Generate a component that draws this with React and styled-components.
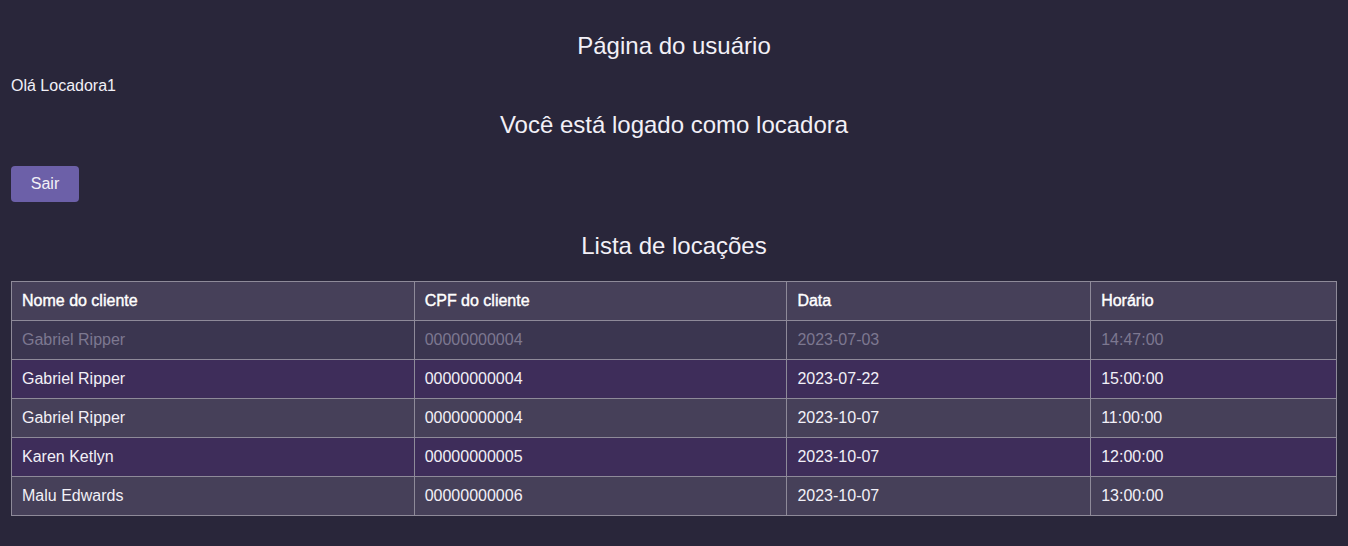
import React from 'react'
import styled, { createGlobalStyle } from 'styled-components'

const GlobalStyle = createGlobalStyle`
  html, body {
    margin: 0;
    padding: 0;
    background: #29263a;
  }
  body {
    font-family: "Liberation Sans", Arial, sans-serif;
    color: #f2f0f7;
  }
`

const Page = styled.div`
  display: flex;
  flex-direction: column;
  padding: 32px 11px 30px;
  min-height: 546px;
  box-sizing: border-box;
`

const Title = styled.h1`
  margin: 0;
  font-size: 24px;
  font-weight: 400;
  line-height: 28px;
  text-align: center;
`

const Greeting = styled.p`
  margin: 17px 0 0;
  font-size: 16px;
  line-height: 18px;
`

const Subtitle = styled(Title)`
  margin-top: 16px;
`

const ExitButton = styled.button`
  align-self: flex-start;
  margin-top: 27px;
  width: 68px;
  height: 36px;
  border: none;
  border-radius: 4px;
  background: #6c60a8;
  color: #f2f0f7;
  font-family: inherit;
  font-size: 16px;
  cursor: pointer;
`

const ListTitle = styled(Title)`
  margin-top: 30px;
`

const Table = styled.table`
  margin-top: 21px;
  width: 100%;
  border-collapse: collapse;
  font-size: 16px;
`

const Th = styled.th`
  border: 1px solid #8e8a99;
  padding: 10px 10px;
  text-align: left;
  font-weight: 400;
  -webkit-text-stroke: 0.4px #ffffff;
  line-height: 18px;
  background: #464059;
  color: #ffffff;
`

const Row = styled.tr`
  background: ${p => (p.$past ? '#3b3650' : p.$odd ? '#3e2d5a' : '#464059')};
  color: ${p => (p.$past ? '#7d7890' : '#f2f0f7')};
`

const Td = styled.td`
  border: 1px solid #8e8a99;
  padding: 10px 10px;
  line-height: 18px;
`

const columns = [
  { label: 'Nome do cliente', width: 403 },
  { label: 'CPF do cliente', width: 373 },
  { label: 'Data', width: 304 },
  { label: 'Horário', width: 246 },
]

const rentals = [
  { name: 'Gabriel Ripper', cpf: '00000000004', date: '2023-07-03', time: '14:47:00', past: true },
  { name: 'Gabriel Ripper', cpf: '00000000004', date: '2023-07-22', time: '15:00:00' },
  { name: 'Gabriel Ripper', cpf: '00000000004', date: '2023-10-07', time: '11:00:00' },
  { name: 'Karen Ketlyn', cpf: '00000000005', date: '2023-10-07', time: '12:00:00' },
  { name: 'Malu Edwards', cpf: '00000000006', date: '2023-10-07', time: '13:00:00' },
]

export default function App() {
  return (
    <>
      <GlobalStyle />
      <Page>
        <Title>Página do usuário</Title>
        <Greeting>Olá Locadora1</Greeting>
        <Subtitle>Você está logado como locadora</Subtitle>
        <ExitButton>Sair</ExitButton>
        <ListTitle>Lista de locações</ListTitle>
        <Table>
          <colgroup>
            {columns.map(c => (
              <col key={c.label} style={{ width: c.width }} />
            ))}
          </colgroup>
          <thead>
            <tr>
              {columns.map(c => (
                <Th key={c.label}>{c.label}</Th>
              ))}
            </tr>
          </thead>
          <tbody>
            {rentals.map((r, i) => (
              <Row key={i} $past={r.past} $odd={i % 2 === 1}>
                <Td>{r.name}</Td>
                <Td>{r.cpf}</Td>
                <Td>{r.date}</Td>
                <Td>{r.time}</Td>
              </Row>
            ))}
          </tbody>
        </Table>
      </Page>
    </>
  )
}
